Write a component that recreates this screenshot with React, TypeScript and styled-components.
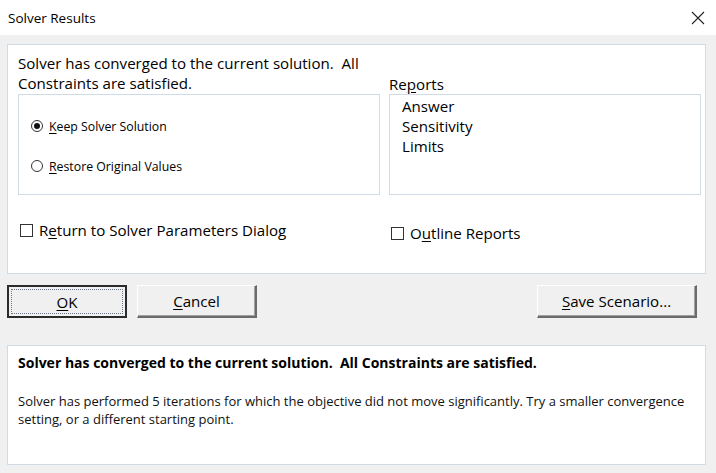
import React from 'react'
import styled, { createGlobalStyle } from 'styled-components'

const GlobalStyle = createGlobalStyle`
    html, body {
        margin: 0;
        padding: 0;
        background: #f0f0f0;
    }
    * {
        box-sizing: border-box;
    }
`

const Window = styled.div`
    width: 716px;
    height: 473px;
    background: #f0f0f0;
    font-family: "Open Sans", "Noto Sans", sans-serif;
    color: #000;
    display: flex;
    flex-direction: column;
    overflow: hidden;
`

const TitleBar = styled.div`
    height: 35px;
    background: #fff;
    display: flex;
    align-items: center;
    justify-content: space-between;
    padding: 0 11px 0 8px;
    font-size: 13.5px;
    flex-shrink: 0;
`

const CloseIcon = styled.svg`
    width: 14px;
    height: 14px;
`

const Body = styled.div`
    display: flex;
    flex-direction: column;
    padding: 9px 10px 0 7px;
`

const Panel = styled.div<{ $height: number }>`
    background: #fff;
    border: 1px solid #cfdce7;
    height: ${p => p.$height}px;
`

const TopPanel = styled(Panel)`
    padding: 8px 6px 0 10px;
    display: flex;
    flex-direction: column;
`

const Grid = styled.div`
    display: grid;
    grid-template-columns: 362px 312px;
    column-gap: 9px;
    align-items: end;
`

const Message = styled.div`
    font-size: 15.1px;
    line-height: 20px;
    padding-bottom: 1px;
`

const Label = styled.div`
    font-size: 15.1px;
    line-height: 20px;
`

const GroupBox = styled.div`
    height: 101px;
    border: 1px solid #cfdce7;
    align-self: start;
`

const RadioList = styled.div`
    display: flex;
    flex-direction: column;
    gap: 20px;
    padding: 21px 0 0 12px;
`

const RadioRow = styled.label`
    display: flex;
    align-items: center;
    gap: 6px;
    font-size: 12.3px;
    height: 20px;
`

const RadioDot = styled.span<{ $checked?: boolean }>`
    width: 12px;
    height: 12px;
    border-radius: 50%;
    border: 1.5px solid #333;
    display: flex;
    align-items: center;
    justify-content: center;

    &::after {
        content: '';
        width: 6px;
        height: 6px;
        border-radius: 50%;
        background: ${p => (p.$checked ? '#111' : 'transparent')};
    }
`

const ReportList = styled.div`
    display: flex;
    flex-direction: column;
    padding: 1px 0 0 12px;
    font-size: 15.1px;
    line-height: 20px;
`

const CheckRow = styled.label<{ $offset: number }>`
    display: flex;
    align-items: center;
    gap: 6px;
    font-size: 15.1px;
    margin-top: ${p => p.$offset}px;
    padding-left: 2px;
    height: 20px;
    align-self: start;
`

const CheckBox = styled.span`
    width: 13px;
    height: 13px;
    border: 1px solid #333;
    background: #fff;
`

const U = styled.span`
    text-decoration: underline;
    text-underline-offset: 2px;
`

const ButtonRow = styled.div`
    display: flex;
    align-items: center;
    gap: 10px;
    margin-top: 11px;
    height: 33px;
`

const Button = styled.div<{ $width: number; $default?: boolean; $push?: boolean }>`
    width: ${p => p.$width}px;
    height: 33px;
    display: flex;
    align-items: center;
    justify-content: center;
    font-size: 15.1px;
    background: #f0f0f0;
    border: 1px solid #fff;
    border-right: 2px solid #6b6b6b;
    border-bottom: 2px solid #6b6b6b;
    box-shadow: inset -1px -1px 0 #a0a0a0;
    margin-left: ${p => (p.$push ? 'auto' : '0')};
    margin-right: ${p => (p.$push ? '9px' : '0')};
    position: relative;

    ${p => p.$default && `
        border: 2px solid #2b2b2b;
        box-shadow: none;
        &::before {
            content: '';
            position: absolute;
            inset: 2px;
            border: 1px dotted #6a7a8a;
        }
    `}
`

const BottomPanel = styled(Panel)`
    margin-top: 27px;
    padding: 8px 10px 0 10px;
`

const Summary = styled.div`
    font-weight: 700;
    font-size: 14px;
    line-height: 18px;
`

const Detail = styled.div`
    font-size: 13px;
    line-height: 18px;
    margin-top: 20px;
    color: #111;
`

const App: React.FC = () => {
    return (
        <>
            <GlobalStyle />
            <Window>
                <TitleBar>
                    <span>Solver Results</span>
                    <CloseIcon viewBox="0 0 14 14">
                        <path d="M1 1 L13 13 M13 1 L1 13" stroke="#222" strokeWidth="1.1" fill="none" />
                    </CloseIcon>
                </TitleBar>
                <Body>
                    <TopPanel $height={230}>
                        <Grid>
                            <Message>
                                Solver has converged to the current solution.&nbsp; All Constraints are satisfied.
                            </Message>
                            <Label>Re<U>p</U>orts</Label>
                            <GroupBox>
                                <RadioList>
                                    <RadioRow>
                                        <RadioDot $checked />
                                        <span><U>K</U>eep Solver Solution</span>
                                    </RadioRow>
                                    <RadioRow>
                                        <RadioDot />
                                        <span><U>R</U>estore Original Values</span>
                                    </RadioRow>
                                </RadioList>
                            </GroupBox>
                            <GroupBox>
                                <ReportList>
                                    <span>Answer</span>
                                    <span>Sensitivity</span>
                                    <span>Limits</span>
                                </ReportList>
                            </GroupBox>
                            <CheckRow $offset={25}>
                                <CheckBox />
                                <span>R<U>e</U>turn to Solver Parameters Dialog</span>
                            </CheckRow>
                            <CheckRow $offset={28}>
                                <CheckBox />
                                <span>O<U>u</U>tline Reports</span>
                            </CheckRow>
                        </Grid>
                    </TopPanel>
                    <ButtonRow>
                        <Button $width={120} $default><span><U>O</U>K</span></Button>
                        <Button $width={120}><span><U>C</U>ancel</span></Button>
                        <Button $width={160} $push><span><U>S</U>ave Scenario...</span></Button>
                    </ButtonRow>
                    <BottomPanel $height={120}>
                        <Summary>Solver has converged to the current solution.&nbsp; All Constraints are satisfied.</Summary>
                        <Detail>
                            Solver has performed 5 iterations for which the objective did not move significantly. Try a smaller convergence setting, or a different starting point.
                        </Detail>
                    </BottomPanel>
                </Body>
            </Window>
        </>
    )
}

export default App
